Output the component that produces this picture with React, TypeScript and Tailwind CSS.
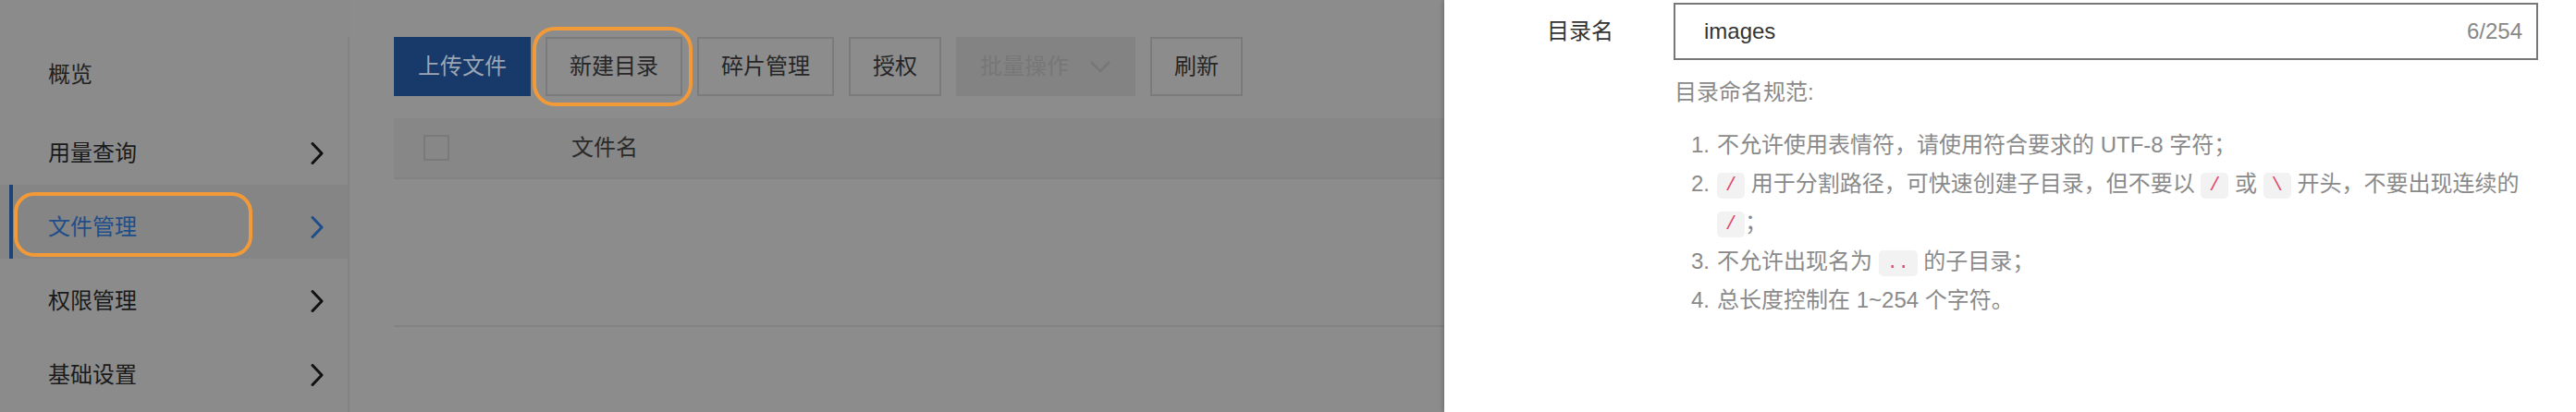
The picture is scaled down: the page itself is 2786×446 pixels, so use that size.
import React from 'react';

const navItems = [
  { label: '用量查询' },
  { label: '文件管理', active: true },
  { label: '权限管理' },
  { label: '基础设置' },
];

function Chevron({ color }: { color: string }) {
  return (
    <svg className="mt-[12px]" width="14" height="24" viewBox="0 0 14 24" fill="none">
      <polyline points="2,1.5 12,12 2,22.5" stroke={color} strokeWidth="3" strokeLinecap="round" strokeLinejoin="round" />
    </svg>
  );
}

function Code({ children }: { children: React.ReactNode }) {
  return (
    <span className="inline-flex h-[28px] items-center rounded-[5px] bg-[#f2f2f2] px-[9px] align-middle font-['Liberation_Mono',monospace] text-[20px] leading-[28px] text-[#e2466c]">
      {children}
    </span>
  );
}

function Sidebar() {
  return (
    <div className="flex h-full w-[378px] shrink-0 bg-[#8b8b8b]">
      <div className="w-[376px] pt-[35px]">
        <div className="flex h-[80px] items-center pl-[52px] pt-[12px] text-[24px] text-[#222]">概览</div>
        <div className="mt-[5px]">
          {navItems.map((item) =>
            item.active ? (
              <div key={item.label} className="relative flex h-[80px] items-center bg-[#858585] pl-[10px] pr-[26px]">
                <div className="h-full w-[4px] bg-[#1c4577]" />
                <span className="flex-1 pl-[38px] pt-[12px] text-[24px] text-[#1f4e8a]">{item.label}</span>
                <Chevron color="#1f4e8a" />
                <div className="absolute left-[15px] top-[8px] h-[70px] w-[258px] rounded-[22px] border-4 border-[#f29a38]" />
              </div>
            ) : (
              <div key={item.label} className="flex h-[80px] items-center pl-[52px] pr-[26px]">
                <span className="flex-1 pt-[12px] text-[24px] text-[#1a1a1a]">{item.label}</span>
                <Chevron color="#111" />
              </div>
            )
          )}
        </div>
      </div>
      <div className="mt-[40px] w-[2px] bg-[#838383]" />
    </div>
  );
}

function Toolbar() {
  const btn = 'flex h-[64px] items-center border-2 border-[#7b7b7b] px-[24px] text-[24px] text-[#262626]';
  return (
    <div className="flex h-[64px] gap-[16px]">
      <div className="flex h-[64px] items-center border-2 border-[#173a6a] bg-[#173a6a] px-[24px] text-[24px] text-[#9ca5b3]">上传文件</div>
      <div className="relative">
        <div className={btn}>新建目录</div>
        <div className="absolute -bottom-[11px] -left-[14px] -right-[11px] -top-[11px] rounded-[24px] border-4 border-[#f29a38]" />
      </div>
      <div className={btn}>碎片管理</div>
      <div className={btn}>授权</div>
      <div className="flex h-[64px] items-center gap-[22px] border-2 border-[#838383] bg-[#838383] px-[24px] text-[24px] text-[#777]">
        批量操作
        <svg width="24" height="14" viewBox="0 0 24 14" fill="none">
          <polyline points="2,2 12,12 22,2" stroke="#777" strokeWidth="2.5" />
        </svg>
      </div>
      <div className={btn}>刷新</div>
    </div>
  );
}

function Main() {
  return (
    <div className="flex-1 bg-[#8c8c8c] pl-[48px] pt-[40px]">
      <Toolbar />
      <div className="mt-[24px]">
        <div className="flex h-[66px] items-center border-b-2 border-[#828282] bg-[#878787] pl-[32px]">
          <div className="h-[28px] w-[28px] border-2 border-[#7a7a7a]" />
          <span className="ml-[132px] text-[24px] text-[#2a2a2a]">文件名</span>
        </div>
        <div className="h-[160px] border-b-2 border-[#828282]" />
      </div>
    </div>
  );
}

function Panel() {
  return (
    <div className="flex-1 bg-white pt-[3px] shadow-[-2px_0_4px_rgba(0,0,0,0.18)]">
      <div className="flex items-center">
        <div className="w-[183px] text-right text-[24px] text-[#333]">目录名</div>
        <div className="ml-[65px] flex h-[62px] w-[935px] items-center justify-between border-2 border-[#777] pl-[31px] pr-[15px]">
          <span className="text-[24px] text-[#333]">images</span>
          <span className="text-[24px] text-[#888]">6/254</span>
        </div>
      </div>
      <div className="mt-[14px] pl-[249px] text-[24px] text-[#8a8a8a]">
        <div className="leading-[42px]">目录命名规范:</div>
        <div className="mt-[15px] whitespace-nowrap leading-[42px]">
          <div className="flex">
            <span className="w-[38px] shrink-0 text-right">1.</span>
            <span className="ml-[8px]">不允许使用表情符，请使用符合要求的 UTF-8 字符；</span>
          </div>
          <div className="flex">
            <span className="w-[38px] shrink-0 text-right">2.</span>
            <span className="ml-[8px]">
              <Code>/</Code> 用于分割路径，可快速创建子目录，但不要以 <Code>/</Code> 或 <Code>\</Code> 开头，不要出现连续的
              <br />
              <Code>/</Code>；
            </span>
          </div>
          <div className="flex">
            <span className="w-[38px] shrink-0 text-right">3.</span>
            <span className="ml-[8px]">
              不允许出现名为 <Code>..</Code> 的子目录；
            </span>
          </div>
          <div className="flex">
            <span className="w-[38px] shrink-0 text-right">4.</span>
            <span className="ml-[8px]">总长度控制在 1~254 个字符。</span>
          </div>
        </div>
      </div>
    </div>
  );
}

export default function App() {
  return (
    <div className="flex h-[446px] w-[2786px] overflow-hidden font-['Liberation_Sans','Noto_Sans_CJK_SC',sans-serif]">
      <div className="flex h-full w-[1562px] shrink-0">
        <Sidebar />
        <Main />
      </div>
      <Panel />
    </div>
  );
}
